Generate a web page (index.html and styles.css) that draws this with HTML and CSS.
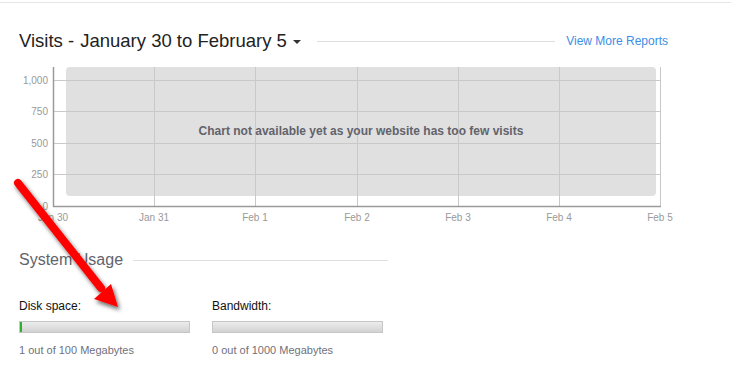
FILE: index.html
```html
<!DOCTYPE html>
<html>
<head>
<title>Dashboard - Visits</title>
<meta name="viewport" content="width=device-width, initial-scale=1.0">
<link rel="stylesheet" href="styles.css">
</head>
<body>
    <div class="page">
        <div class="top-rule"></div>

        <!-- Visits -->
        <section class="visits">
            <div class="section-head">
                <h2 class="head-title">Visits - <span class="range">January 30 to February 5</span><span class="caret"></span></h2>
                <div class="head-rule"></div>
                <a class="more-link" href="#">View More Reports</a>
            </div>

            <div class="chart">
                <svg class="chart-svg" width="680" height="170" viewBox="0 60 680 170">
                    <rect class="chart-empty" x="66" y="67" width="590" height="129" rx="4"></rect>

                    <g class="grid">
                        <line x1="53" y1="80.5" x2="660" y2="80.5"></line>
                        <line x1="53" y1="111.5" x2="660" y2="111.5"></line>
                        <line x1="53" y1="143.5" x2="660" y2="143.5"></line>
                        <line x1="53" y1="174.5" x2="660" y2="174.5"></line>
                        <line x1="154.5" y1="67" x2="154.5" y2="206"></line>
                        <line x1="255.5" y1="67" x2="255.5" y2="206"></line>
                        <line x1="357.5" y1="67" x2="357.5" y2="206"></line>
                        <line x1="458.5" y1="67" x2="458.5" y2="206"></line>
                        <line x1="559.5" y1="67" x2="559.5" y2="206"></line>
                        <line x1="660.5" y1="67" x2="660.5" y2="206"></line>
                    </g>

                    <g class="axis">
                        <line x1="53.5" y1="67" x2="53.5" y2="207"></line>
                        <line x1="53" y1="206.5" x2="661" y2="206.5"></line>
                    </g>

                    <g class="y-labels">
                        <text x="48" y="84">1,000</text>
                        <text x="48" y="115">750</text>
                        <text x="48" y="147">500</text>
                        <text x="48" y="178">250</text>
                        <text x="48" y="210">0</text>
                    </g>

                    <g class="x-labels">
                        <text x="53" y="221">Jan 30</text>
                        <text x="154" y="221">Jan 31</text>
                        <text x="255" y="221">Feb 1</text>
                        <text x="357" y="221">Feb 2</text>
                        <text x="458" y="221">Feb 3</text>
                        <text x="559" y="221">Feb 4</text>
                        <text x="660" y="221">Feb 5</text>
                    </g>

                    <text class="chart-msg" x="361" y="135">Chart not available yet as your website has too few visits</text>
                </svg>
            </div>
        </section>

        <!-- System usage -->
        <section class="usage">
            <div class="usage-head">
                <h3 class="usage-title">System Usage</h3>
                <div class="head-rule"></div>
            </div>

            <div class="meters">
                <div class="meter">
                    <p class="meter-label">Disk space:</p>
                    <div class="meter-bar">
                        <div class="meter-fill" style="width: 1%"></div>
                    </div>
                    <p class="meter-note">1 out of 100 Megabytes</p>
                </div>
                <div class="meter">
                    <p class="meter-label">Bandwidth:</p>
                    <div class="meter-bar">
                        <div class="meter-fill" style="width: 0%"></div>
                    </div>
                    <p class="meter-note">0 out of 1000 Megabytes</p>
                </div>
            </div>
        </section>

        <!-- annotation arrow lying over the page -->
        <svg class="arrow" width="140" height="320" viewBox="0 0 140 320">
            <defs>
                <filter id="arrowShadow" x="-30%" y="-30%" width="160%" height="160%">
                    <feDropShadow dx="2" dy="3" stdDeviation="2" flood-color="#000" flood-opacity="0.6"></feDropShadow>
                </filter>
            </defs>
            <g filter="url(#arrowShadow)">
                <line x1="18" y1="183" x2="101" y2="288" stroke="#ff0000" stroke-width="8" stroke-linecap="round"></line>
                <polygon points="118,307 111,284 94,299" fill="#ff0000"></polygon>
            </g>
        </svg>
    </div>
</body>
</html>
```

FILE: styles.css
```css
/* page */
body {
    margin: 0;
    font-family: "Liberation Sans", Arial, sans-serif;
    background-color: #ffffff;
    color: #222;
}

.page {
    position: relative;
    width: 731px;
    height: 379px;
    overflow: hidden;
}

.top-rule {
    margin-top: 2px;
    border-top: 1px solid #e6e6e6;
}

/* heading row */
.section-head {
    display: flex;
    align-items: center;
    margin: 27px 63px 0 19px;
    height: 22px;
}

.head-title {
    margin: 0;
    font-size: 18.5px;
    font-weight: normal;
    color: #222;
    white-space: nowrap;
    display: flex;
    align-items: center;
}

.range {
    margin-left: 6px;
}

.caret {
    width: 0;
    height: 0;
    margin-left: 6px;
    margin-top: 1px;
    border-left: 4px solid transparent;
    border-right: 4px solid transparent;
    border-top: 4px solid #333;
}

.head-rule {
    flex: 1;
    height: 0;
    border-top: 1px solid #dedede;
}

.section-head .head-rule {
    margin: 0 11px 0 16px;
}

.more-link {
    font-size: 12px;
    color: #3d8ee4;
    text-decoration: none;
}

/* chart */
.chart {
    margin-top: 8px;
    height: 170px;
}

.chart-svg {
    display: block;
}

.chart-empty {
    fill: #e0e0e0;
}

.grid line {
    stroke: #c9c9c9;
    stroke-width: 1;
}

.axis line {
    stroke: #9a9a9a;
    stroke-width: 1.5;
}

.y-labels text {
    font-size: 10px;
    fill: #999;
    text-anchor: end;
}

.x-labels text {
    font-size: 10px;
    fill: #999;
    text-anchor: middle;
}

.chart-msg {
    font-size: 12px;
    font-weight: bold;
    fill: #62636b;
    text-anchor: middle;
}

/* system usage */
.usage {
    width: 369px;
    margin: 20px 0 0 19px;
}

.usage-head {
    display: flex;
    align-items: center;
    height: 20px;
}

.usage-title {
    margin: 0 10px 0 0;
    font-size: 16px;
    font-weight: normal;
    color: #62636b;
}

.usage-head .head-rule {
    margin-top: 1px;
}

.meters {
    display: flex;
    gap: 22px;
    margin-top: 29px;
}

.meter {
    width: 171px;
}

.meter-label {
    margin: 0;
    font-size: 12px;
    line-height: 14px;
    color: #111;
}

.meter-bar {
    box-sizing: border-box;
    height: 12px;
    margin-top: 8px;
    border: 1px solid #c6c6c6;
    background: linear-gradient(#ececec, #d2d2d2);
    overflow: hidden;
}

.meter-fill {
    height: 100%;
    min-width: 0;
    background-color: #2fb02f;
}

.meter-fill[style*="1%"] {
    min-width: 2px;
}

.meter-note {
    margin: 11px 0 0;
    font-size: 11px;
    line-height: 13px;
    color: #70707c;
}

/* annotation */
.arrow {
    position: absolute;
    left: 0;
    top: 0;
    pointer-events: none;
}
```
